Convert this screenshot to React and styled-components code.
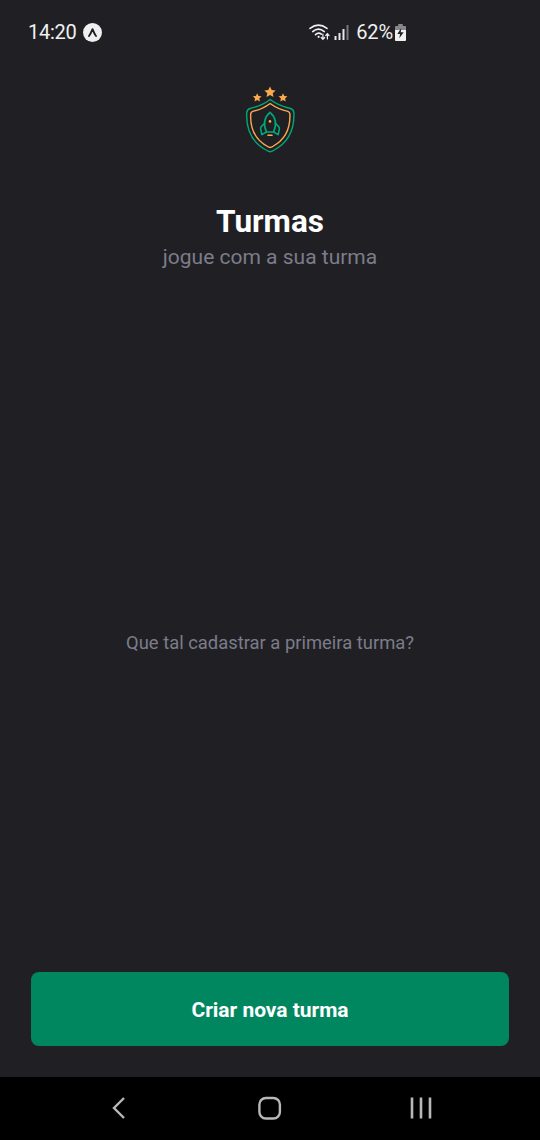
import React from 'react';
import styled, { createGlobalStyle } from 'styled-components';

const GlobalStyle = createGlobalStyle`
  * { box-sizing: border-box; }
  body { margin: 0; background: #202024; font-family: Roboto, sans-serif; }
`;

const Screen = styled.div`
  display: flex;
  flex-direction: column;
  width: 540px;
  height: 1140px;
  background: #202024;
`;

const StatusBar = styled.header`
  display: flex;
  align-items: center;
  justify-content: space-between;
  flex: none;
  height: 64px;
  padding: 0 134px 0 28px;
  color: #f0f0f0;
  font-size: 20px;
  line-height: 24px;
`;

const StatusGroup = styled.div`
  display: flex;
  align-items: center;
  gap: ${({ $gap }) => $gap}px;
`;

const StatusText = styled.span`
  letter-spacing: ${({ $spacing = 0 }) => $spacing}px;
`;

const Icon = styled.svg`
  display: block;
  flex: none;
  overflow: visible;
`;

const Content = styled.main`
  display: flex;
  flex: 1;
  flex-direction: column;
  align-items: center;
  padding: 16px 31.4px 31.5px;
`;

const Title = styled.h1`
  margin: 41px 0 0;
  color: #fff;
  font-size: 31.5px;
  font-weight: 700;
  line-height: 42px;
`;

const Subtitle = styled.p`
  margin: 0;
  color: #7c7c8a;
  font-size: 21px;
  line-height: 28px;
`;

const EmptyState = styled.div`
  display: flex;
  flex: 1;
  align-items: center;
  justify-content: center;
  padding-top: 42px;
`;

const EmptyText = styled.p`
  margin: 0;
  color: #7c7c8a;
  font-size: 18.4px;
  line-height: 24px;
`;

const Button = styled.button`
  width: 100%;
  height: 73.5px;
  padding: 2px 0 0;
  border: 0;
  border-radius: 8px;
  background: #00875f;
  color: #fff;
  font: 700 21px Roboto, sans-serif;
  letter-spacing: -0.03px;
`;

const NavBar = styled.nav`
  display: flex;
  flex: none;
  align-items: center;
  justify-content: space-between;
  height: 63px;
  padding: 0 108px 2px 111px;
  background: #000;
`;

const STAR = 'M0-5.5 1.7-1.9 5.6-1.5 2.7 1.2 3.5 5 0 3.1-3.5 5-2.7 1.2-5.6-1.5-1.7-1.9Z';

function Logo() {
  return (
    <Icon width="70" height="80" viewBox="0 0 70 80" fill="none" strokeLinejoin="round" strokeLinecap="round">
      <g fill="#fba94c">
        <path transform="translate(35 12)" d={STAR} />
        <path transform="translate(22.2 17.5) scale(.78)" d={STAR} />
        <path transform="translate(48 17.5) scale(.78)" d={STAR} />
      </g>
      <path d="M35.2 19.5C29.5 24 22.5 26.8 15 28.5C12.5 29.2 11.9 30.5 11.7 33C11 51 18.5 63.5 32 70.5Q35.2 73 38.4 70.5C52 63.5 59.5 51 58.9 33C58.7 30.5 58 29.2 55.5 28.5C48 26.8 41 24 35.2 19.5Z" stroke="#00a878" strokeWidth="1.4" />
      <path d="M35.2 23.5C30.2 27.2 24.5 29.8 18.5 31.1Q15.9 31.7 15.7 34C15 49.5 21.5 60.5 32.7 66.5Q35.2 68.4 37.7 66.5C49 60.5 55.5 49.5 54.9 34Q54.7 31.7 52 31.1C46 29.8 40.2 27.2 35.2 23.5Z" stroke="#fba94c" strokeWidth="1.4" />
      <g stroke="#00a878" strokeWidth="1.6">
        <path d="M35 32.3C29.7 36.8 27.8 43.5 31.4 52H38.6C42.2 43.5 40.3 36.8 35 32.3Z" />
        <path d="M29.6 43.4 26.2 46.8Q25.4 47.8 25.7 49.2L26.8 54.6 31.4 52M40.4 43.4 43.8 46.8Q44.6 47.8 44.3 49.2L43.2 54.6 38.6 52" />
      </g>
      <circle cx="35" cy="41.4" r="1.3" fill="#fba94c" />
      <path d="M33 55.2H37" stroke="#fba94c" strokeWidth="1.6" />
    </Icon>
  );
}

function AppBadge() {
  return (
    <Icon width="19" height="19" viewBox="0 0 19 19">
      <circle cx="9.5" cy="9.5" r="9.5" fill="#f0f0f0" />
      <path d="M6 13C7.4 11.3 8.4 9 9.5 6.2C10.6 9 11.6 11.3 13 13" fill="none" stroke="#202024" strokeWidth="1.9" strokeLinecap="round" strokeLinejoin="round" />
    </Icon>
  );
}

function WifiIcon() {
  return (
    <Icon width="21" height="18" viewBox="0 0 21 18" fill="none" stroke="#f0f0f0" strokeWidth="1.6" strokeLinecap="round">
      <path d="M1 5.4Q9.5-1.2 18 5.4M3.7 8.6Q9.5 3.6 15.3 8.6M6.5 11.6Q9.5 8.7 12.3 11.2" />
      <circle cx="9.6" cy="13.8" r="1.1" fill="#f0f0f0" stroke="none" />
      <path d="M13.9 11.2V16M12.2 14.5 13.9 16.3 15.6 14.5M18.4 16V11M16.8 12.5 18.4 10.7 20 12.5" strokeWidth="1.2" />
    </Icon>
  );
}

function SignalIcon() {
  return (
    <Icon width="15" height="16" viewBox="0 0 15 16">
      <path d="M.5 12h2v4h-2zM4.5 9h2v7h-2zM8.5 5h2v11h-2z" fill="#e8e8e8" />
      <path d="M12.5 1h2v15h-2z" fill="#77777a" />
    </Icon>
  );
}

function BatteryIcon() {
  return (
    <Icon width="11" height="17" viewBox="0 0 12 17" preserveAspectRatio="none">
      <path d="M3.5 0h5v2H11q1 0 1 1v4H0V3q0-1 1-1h2.5z" fill="#88888b" />
      <path d="M0 6h12v10q0 1-1 1H1q-1 0-1-1z" fill="#f0f0f0" />
      <path d="M6.8 4 2.5 10h3L4.7 14.3 9.5 8.3H6.3z" fill="#202024" />
    </Icon>
  );
}

export default function App() {
  return (
    <Screen>
      <GlobalStyle />
      <StatusBar>
        <StatusGroup $gap={6}>
          <StatusText $spacing={-0.25}>14:20</StatusText>
          <AppBadge />
        </StatusGroup>
        <StatusGroup $gap={2}>
          <StatusGroup $gap={7}>
            <StatusGroup $gap={4}>
              <WifiIcon />
              <SignalIcon />
            </StatusGroup>
            <StatusText $spacing={-0.1}>62%</StatusText>
          </StatusGroup>
          <BatteryIcon />
        </StatusGroup>
      </StatusBar>
      <Content>
        <Logo />
        <Title>Turmas</Title>
        <Subtitle>jogue com a sua turma</Subtitle>
        <EmptyState>
          <EmptyText>Que tal cadastrar a primeira turma?</EmptyText>
        </EmptyState>
        <Button type="button">Criar nova turma</Button>
      </Content>
      <NavBar>
        <Icon width="15" height="24" viewBox="0 0 15 24" fill="none" stroke="#b8b8b8" strokeWidth="2.4">
          <path d="M13 2 3 12 13 22" />
        </Icon>
        <Icon width="24" height="24" viewBox="-1.4 0 24 24" fill="none" stroke="#b8b8b8" strokeWidth="2.4">
          <rect x="2" y="2" width="20.5" height="20.5" rx="6.5" />
        </Icon>
        <Icon width="22" height="24" viewBox="0 0 22 24" fill="none" stroke="#b8b8b8" strokeWidth="2.6">
          <path d="M2 1.5V22.5M11 1.5V22.5M20 1.5V22.5" />
        </Icon>
      </NavBar>
    </Screen>
  );
}
